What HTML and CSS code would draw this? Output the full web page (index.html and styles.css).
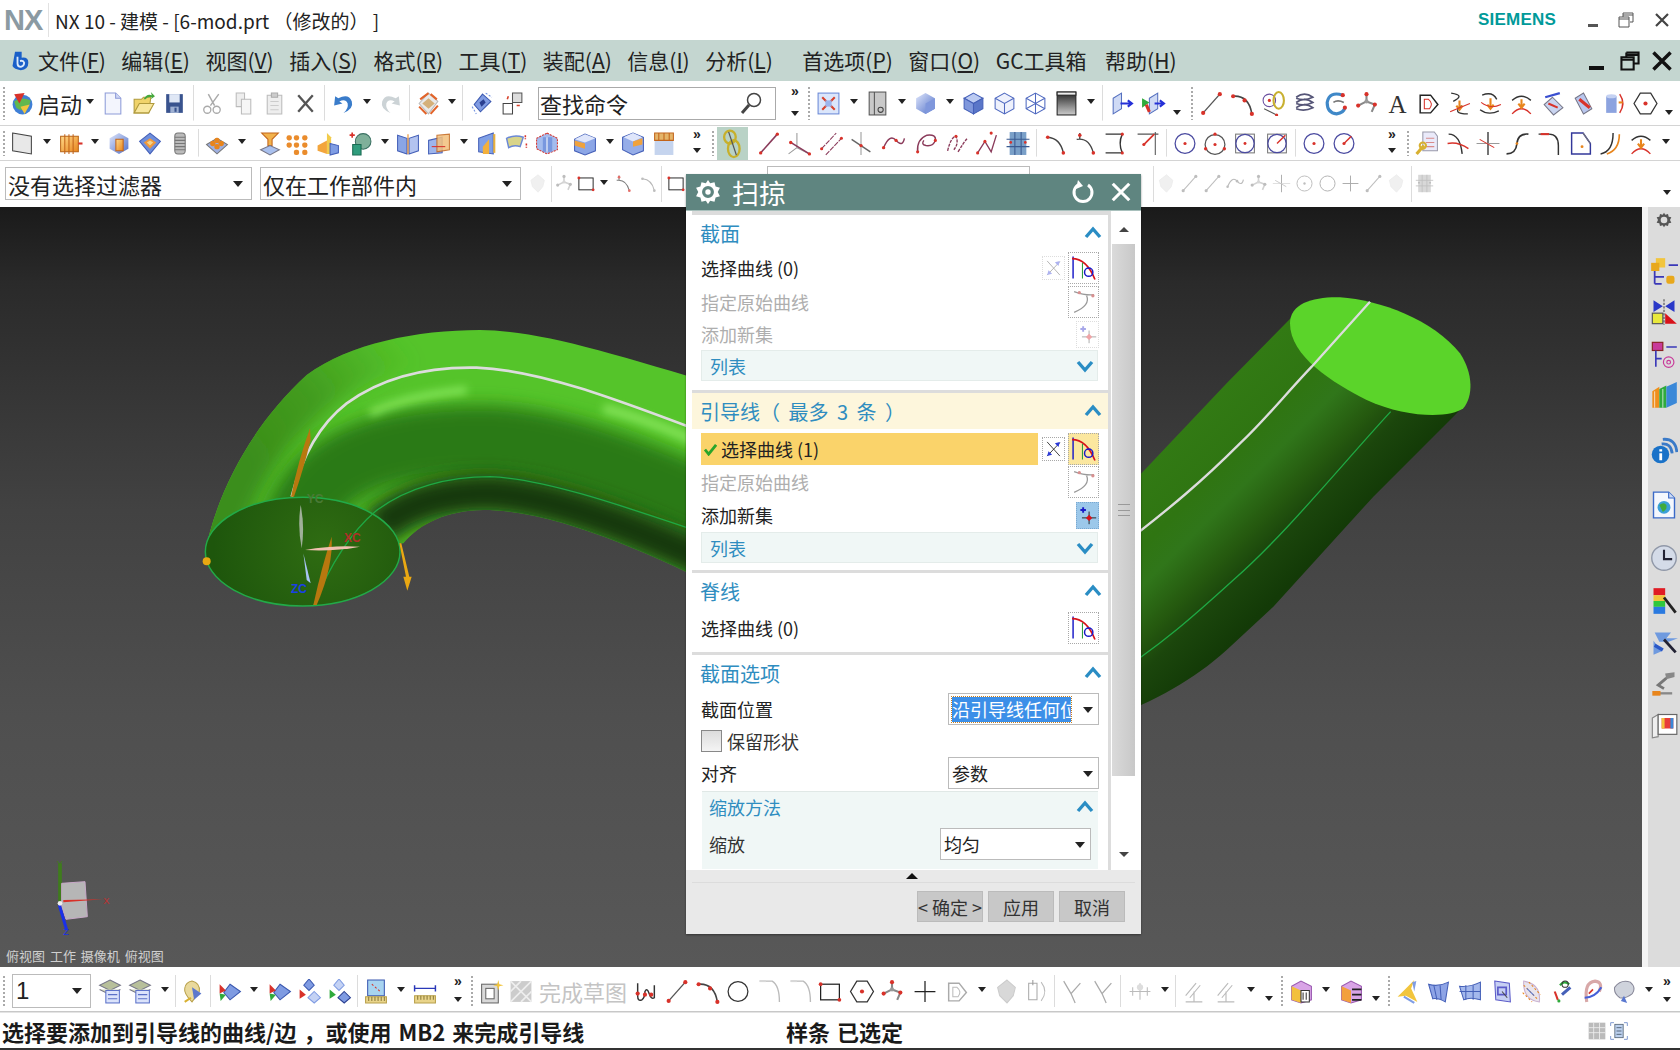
FILE: index.html
```html
<!DOCTYPE html>
<html lang="zh-CN">
<head>
<meta charset="utf-8">
<title>NX 10 - 建模</title>
<link rel="stylesheet" href="styles.css">
</head>
<body>
<svg class="sprite" aria-hidden="true">
<defs>
<linearGradient id="gb" x1="0" y1="0" x2="1" y2="1"><stop offset="0" stop-color="#dfe6fb"/><stop offset="1" stop-color="#4f6fc8"/></linearGradient>
<linearGradient id="go" x1="0" y1="0" x2="1" y2="1"><stop offset="0" stop-color="#ffd98a"/><stop offset="1" stop-color="#e8851c"/></linearGradient>
<linearGradient id="gg" x1="0" y1="0" x2="0" y2="1"><stop offset="0" stop-color="#222"/><stop offset="1" stop-color="#ccc"/></linearGradient>
</defs>
<symbol id="start" viewBox="0 0 24 24"><circle cx="12" cy="13" r="9.5" fill="#3f7fd6"/><path d="M4 10Q10 5 20 9L17 17Q10 20 6 16Z" fill="#62b84e"/><path d="M4 3L14 2L9 12Z" fill="#d8322a"/><path d="M10 15L19 13L14 22Z" fill="#f2c53d"/></symbol>
<symbol id="doc" viewBox="0 0 24 24"><path d="M5 2H15L20 7V22H5Z" fill="#f3f5fd" stroke="#8d9bd8"/><path d="M15 2V7H20" fill="#cfd7f4" stroke="#8d9bd8"/></symbol>
<symbol id="folder" viewBox="0 0 24 24"><path d="M3 8H10L12 6H19L17 21H3Z" fill="#f0d36a" stroke="#b09a3c"/><path d="M3 21L8 12H22L17 21Z" fill="#f8e79d" stroke="#b09a3c"/><path d="M12 8Q15 2 20 4L19 1L23 5L19 8L20 6Q16 5 14 8Z" fill="#45a83c"/></symbol>
<symbol id="save" viewBox="0 0 24 24"><path d="M4 3H20V21H4Z" fill="#39538e"/><path d="M7 3H17V11H7Z" fill="#dfe7f5"/><path d="M8 15H16V21H8Z" fill="#9eb0d2"/><path d="M12 16H14V20H12Z" fill="#39538e"/></symbol>
<symbol id="cut" viewBox="0 0 24 24"><path d="M8 3L14 14M18 3L10 14" stroke="#aaa" stroke-width="1.4" fill="none"/><circle cx="7" cy="18" r="3.4" fill="none" stroke="#aaa" stroke-width="1.3"/><circle cx="16" cy="18" r="3.4" fill="none" stroke="#aaa" stroke-width="1.3"/></symbol>
<symbol id="copy" viewBox="0 0 24 24"><path d="M5 2H13V15H5Z" fill="#eee" stroke="#bbb"/><path d="M10 8H19V22H10Z" fill="#f6f6f6" stroke="#bbb"/></symbol>
<symbol id="paste" viewBox="0 0 24 24"><path d="M5 4H19V22H5Z" fill="#eee" stroke="#bbb"/><path d="M9 2H15V6H9Z" fill="#ccc" stroke="#aaa"/><path d="M8 10H16M8 14H16M8 18H16" stroke="#ccc"/></symbol>
<symbol id="xx" viewBox="0 0 24 24"><path d="M5 4L19 20M19 4L5 20" stroke="#555" stroke-width="2.2" fill="none"/></symbol>
<symbol id="undo" viewBox="0 0 24 24"><path d="M4 5L3 14L11 12L8 10Q14 7 16 12Q17 17 12 21Q22 17 20 10Q17 2 7 7Z" fill="#3a7cca"/></symbol>
<symbol id="redo" viewBox="0 0 24 24"><path d="M20 5L21 14L13 12L16 10Q10 7 8 12Q7 17 12 21Q2 17 4 10Q7 2 17 7Z" fill="#ccd3d6"/></symbol>
<symbol id="stack" viewBox="0 0 24 24"><path d="M12 2L21 10L12 22L3 12Z" fill="#e9e9e9" stroke="#bbb"/><path d="M4 8L12 2M20 8L14 3M3 15L10 22M21 14L14 22" stroke="#e2642a" stroke-width="2"/><path d="M6 12L12 7L18 12L12 17Z" fill="#d4b07a"/></symbol>
<symbol id="dia" viewBox="0 0 24 24"><path d="M13 3L21 10L11 20L5 13Z" fill="#7f9be2" stroke="#3a58b0"/><path d="M10 11L14 8L16 11L12 15Z" fill="#2a3f90"/><path d="M3 15L7 22M16 2L22 6" stroke="#6f8fdf" stroke-dasharray="2 1.5"/></symbol>
<symbol id="boxes" viewBox="0 0 24 24"><path d="M12 2H21V11H12Z" fill="#ddd" stroke="#555"/><path d="M3 12H12V22H3Z" fill="#fff" stroke="#444"/><path d="M7 8L8 5M16 14L19 14" stroke="#d8412a" stroke-width="1.5"/></symbol>
<symbol id="fit" viewBox="0 0 24 24"><rect x="2" y="2" width="20" height="20" fill="#dbe6fb" stroke="#6a88d6"/><path d="M6 6L10 10M18 6L14 10M6 18L10 14M18 18L14 14" stroke="#d8412a" stroke-width="2"/><rect x="9" y="9" width="6" height="6" fill="#9cb4ec"/></symbol>
<symbol id="vsheet" viewBox="0 0 24 24"><rect x="4" y="1" width="16" height="22" fill="#c9c9c9" stroke="#555"/><path d="M9 1V23" stroke="#555"/><circle cx="15" cy="18" r="2.5" fill="none" stroke="#444"/></symbol>
<symbol id="cubeg" viewBox="0 0 24 24"><path d="M12 2L21 7V17L12 22L3 17V7Z" fill="url(#gb)"/><path d="M12 12L21 7V17L12 22Z" fill="#7f97dc"/></symbol>
<symbol id="cube" viewBox="0 0 24 24"><path d="M12 2L21 7L12 12L3 7Z" fill="#bccbf2" stroke="#4560b8"/><path d="M3 7L12 12V22L3 17Z" fill="#7f97dc" stroke="#4560b8"/><path d="M21 7L12 12V22L21 17Z" fill="#5a76c8" stroke="#4560b8"/></symbol>
<symbol id="cubew" viewBox="0 0 24 24"><path d="M12 2L21 7V17L12 22L3 17V7Z" fill="#eef1fc" stroke="#4f69c0"/><path d="M3 7L12 12L21 7M12 12V22" stroke="#4f69c0" fill="none"/></symbol>
<symbol id="cubewire" viewBox="0 0 24 24"><path d="M12 2L21 7V17L12 22L3 17V7Z" fill="none" stroke="#4f69c0"/><path d="M3 7L12 12L21 7M12 12V22M3 17L12 12L21 17M12 2V12" stroke="#4f69c0" fill="none"/></symbol>
<symbol id="gradbox" viewBox="0 0 24 24"><rect x="3" y="1" width="18" height="22" fill="url(#gg)" stroke="#222"/><rect x="3" y="1" width="18" height="3" fill="#eee" stroke="#222"/></symbol>
<symbol id="pane1" viewBox="0 0 24 24"><path d="M4 7L12 2V17L4 22Z" fill="#cfdaf5" stroke="#5570bf"/><path d="M11 12H21M18 9L22 12L18 15" stroke="#2530d8" stroke-width="2" fill="none"/></symbol>
<symbol id="pane2" viewBox="0 0 24 24"><path d="M9 7L17 2V17L9 22Z" fill="#cfdaf5" stroke="#5570bf"/><path d="M2 7L9 11L2 16Z" fill="#2faa3c"/><path d="M6 13L9 20" stroke="#d8322a" stroke-width="3"/><path d="M14 12H22M19 9L23 12L19 15" stroke="#2530d8" stroke-width="2" fill="none"/></symbol>
<symbol id="line" viewBox="0 0 24 24"><path d="M4 21L20 3" stroke="#555" stroke-width="1.3"/><circle cx="4" cy="21" r="2" fill="#d8322a"/><circle cx="20" cy="3" r="2" fill="#d8322a"/></symbol>
<symbol id="arc" viewBox="0 0 24 24"><path d="M3 5Q18 4 21 22" stroke="#444" stroke-width="1.5" fill="none"/><circle cx="3" cy="5" r="2" fill="#d8322a"/><circle cx="21" cy="22" r="2" fill="#d8322a"/><circle cx="14" cy="9" r="2" fill="#d8322a"/></symbol>
<symbol id="rings" viewBox="0 0 24 24"><circle cx="8" cy="9" r="6" fill="none" stroke="#6a4fa0"/><ellipse cx="17" cy="9" rx="5" ry="8" fill="none" stroke="#c8b030" stroke-width="2"/><path d="M3 17L15 23" stroke="#555"/><circle cx="8" cy="9" r="1.5" fill="#d8322a"/><circle cx="15" cy="23" r="1.5" fill="#d8322a"/></symbol>
<symbol id="helix" viewBox="0 0 24 24"><path d="M4 6Q12 0 20 6Q12 10 4 7M4 11Q12 5 20 11Q12 15 4 12M4 16Q12 10 20 16Q12 20 4 17" fill="none" stroke="#557" stroke-width="1.6"/></symbol>
<symbol id="swirl" viewBox="0 0 24 24"><path d="M19 4Q6 0 4 11Q4 21 13 22Q20 21 21 16" fill="none" stroke="#3f88c8" stroke-width="3"/><path d="M10 11Q14 8 20 11" stroke="#777" stroke-width="1.5" fill="none"/><circle cx="19" cy="4" r="2" fill="#d8322a"/><circle cx="21" cy="16" r="2" fill="#d8322a"/></symbol>
<symbol id="poly" viewBox="0 0 24 24"><path d="M12 3V10L4 14M12 10L20 13L17 20" stroke="#888" stroke-width="2" fill="none"/><circle cx="12" cy="3" r="2" fill="#d8322a"/><circle cx="4" cy="14" r="2" fill="#d8322a"/><circle cx="20" cy="13" r="2" fill="#d8322a"/><circle cx="12" cy="10" r="2" fill="#999"/></symbol>
<symbol id="outline" viewBox="0 0 24 24"><path d="M4 4H14L21 13L14 21H4Z" fill="none" stroke="#222" stroke-width="1.4"/><path d="M8 8H12Q17 12 13 17H8Z" fill="none" stroke="#d8322a"/></symbol>
<symbol id="curvea" viewBox="0 0 24 24"><path d="M4 2Q18 4 6 10M14 14Q4 22 20 22" fill="none" stroke="#333" stroke-width="1.3"/><path d="M12 9V16M9 14L12 18L15 14" stroke="#e8851c" stroke-width="2" fill="none"/><path d="M3 20Q12 16 22 12" stroke="#d8322a" fill="none"/></symbol>
<symbol id="curveb" viewBox="0 0 24 24"><path d="M4 4Q14 0 18 8M2 18Q10 24 20 19" fill="none" stroke="#333" stroke-width="1.3"/><path d="M12 7V15M9 13L12 17L15 13" stroke="#e8851c" stroke-width="2" fill="none"/><path d="M3 11Q12 18 22 13" stroke="#d8322a" fill="none"/></symbol>
<symbol id="curvec" viewBox="0 0 24 24"><path d="M3 9Q12 1 21 9" fill="none" stroke="#333" stroke-width="1.3"/><path d="M3 22Q12 12 21 22" fill="none" stroke="#d8322a" stroke-width="1.3"/><path d="M12 8V15M9 12L12 16L15 12" stroke="#e8851c" stroke-width="2" fill="none"/></symbol>
<symbol id="bar" viewBox="0 0 24 24"><path d="M5 6L19 2" stroke="#3a4fd0" stroke-width="2.2"/><path d="M12 6L22 16L13 23L4 13Z" fill="#c9d4f0" stroke="#778"/><path d="M8 12L17 16" stroke="#d8322a" stroke-width="2"/></symbol>
<symbol id="twist" viewBox="0 0 24 24"><path d="M4 7L12 2L20 17L12 22Z" fill="#b9c7ee" stroke="#778"/><path d="M8 8L18 16" stroke="#d8322a" stroke-width="3"/></symbol>
<symbol id="cyl" viewBox="0 0 24 24"><path d="M4 5H14V21H4Z" fill="#8ca3df"/><ellipse cx="9" cy="5" rx="5" ry="2" fill="#c4d1f2"/><path d="M17 3Q23 12 17 21" stroke="#d8322a" fill="none" stroke-width="1.4"/><path d="M16 11H20" stroke="#e8851c" stroke-width="2"/></symbol>
<symbol id="hex" viewBox="0 0 24 24"><path d="M7 2H17L23 12L17 22H7L1 12Z" fill="#fff" stroke="#333" stroke-width="1.2"/><circle cx="12" cy="12" r="2" fill="#d8322a"/></symbol>
<symbol id="sheet" viewBox="0 0 24 24"><path d="M3 2L21 5V22L3 19Z" fill="#e8e8e8" stroke="#444"/></symbol>
<symbol id="ocyl" viewBox="0 0 24 24"><path d="M3 5H20V20H3Z" fill="url(#go)" stroke="#b8661a"/><path d="M7 3V22M11 3V22M15 3V22" stroke="#c2641a"/><path d="M20 12H24" stroke="#d8322a" stroke-width="2"/></symbol>
<symbol id="ocube" viewBox="0 0 24 24"><path d="M12 2L21 7V17L12 22L3 17V7Z" fill="url(#gb)"/><path d="M9 8H16V19H9Z" fill="url(#go)" stroke="#c2641a"/></symbol>
<symbol id="hollow" viewBox="0 0 24 24"><path d="M12 2L22 10L12 22L2 10Z" fill="#6e8edb" stroke="#4560b8"/><path d="M12 7L18 11L12 17L6 11Z" fill="#f0993a"/><path d="M9 11L12 9L15 11L12 14Z" fill="#f7d38a"/></symbol>
<symbol id="thread" viewBox="0 0 24 24"><rect x="7" y="2" width="10" height="20" rx="3" fill="#bbb" stroke="#777"/><path d="M7 6H17M7 9H17M7 12H17M7 15H17M7 18H17" stroke="#777"/></symbol>
<symbol id="tray" viewBox="0 0 24 24"><path d="M2 13L12 7L22 13L12 22Z" fill="#9eb0e2" stroke="#777"/><circle cx="8" cy="12" r="2.6" fill="#e8851c"/><circle cx="12" cy="9" r="2.6" fill="#e8851c"/><circle cx="16" cy="12" r="2.6" fill="#e8851c"/><circle cx="12" cy="15" r="2.6" fill="#e8851c"/></symbol>
<symbol id="pad" viewBox="0 0 24 24"><path d="M4 2H20L14 8V14H10V8Z" fill="#f2b24c" stroke="#c2641a"/><path d="M3 18L12 14L21 18L12 23Z" fill="#a9c0ee" stroke="#778"/></symbol>
<symbol id="ogrid" viewBox="0 0 24 24"><g fill="#ea8c2c"><rect x="2" y="4" width="5" height="5" rx="2"/><rect x="9" y="4" width="5" height="5" rx="2"/><rect x="17" y="4" width="5" height="5" rx="2"/><rect x="2" y="11" width="5" height="5" rx="2"/><rect x="9" y="11" width="5" height="5" rx="2"/><rect x="17" y="11" width="5" height="5" rx="2"/><rect x="9" y="18" width="5" height="5" rx="2"/><rect x="17" y="18" width="5" height="5" rx="2"/></g></symbol>
<symbol id="omix" viewBox="0 0 24 24"><path d="M2 14L11 9V22L2 19Z" fill="#f3a53c"/><path d="M11 2L15 6V22L11 22Z" fill="#f2cc4c"/><path d="M14 12L22 14V21L14 23Z" fill="#7f9de4" stroke="#4560b8"/></symbol>
<symbol id="sphere" viewBox="0 0 24 24"><path d="M2 4H7M4.5 1.5V6.5" stroke="#d8322a" stroke-width="1.6"/><circle cx="15" cy="10" r="7.5" fill="#7fb09a" stroke="#3a7062"/><path d="M5 13H13V23H5Z" fill="#2f9c7c"/><path d="M5 13H13V23H5Z" fill="none" stroke="#1a6a52"/></symbol>
<symbol id="book" viewBox="0 0 24 24"><path d="M2 4L11 7V22L2 19Z" fill="#8aa5e6" stroke="#4560b8"/><path d="M22 4L13 7V22L22 19Z" fill="#b3c4f0" stroke="#4560b8"/><path d="M12 3V22" stroke="#e8851c"/></symbol>
<symbol id="split" viewBox="0 0 24 24"><path d="M2 9L15 6V21L2 22Z" fill="#9eb5ec" stroke="#4560b8"/><path d="M10 4L22 3V18L10 20Z" fill="#f3c07c" opacity=".85" stroke="#c2641a"/><path d="M5 15H18" stroke="#d8322a"/></symbol>
<symbol id="byel" viewBox="0 0 24 24"><path d="M4 7L18 2V22L4 20Z" fill="#80a0e6" stroke="#4560b8"/><path d="M8 15L14 8V22H8Z" fill="#f3b03c"/><path d="M19 3V21" stroke="#e8b03c" stroke-width="2"/></symbol>
<symbol id="patch" viewBox="0 0 24 24"><path d="M2 7Q10 3 18 6L15 15Q9 13 4 16Z" fill="#d8d48a" stroke="#6a88d6" stroke-width="1.4"/><path d="M20 4V8M21 12V16" stroke="#d8322a" stroke-width="1.5" stroke-dasharray="2 1"/></symbol>
<symbol id="bdash" viewBox="0 0 24 24"><path d="M12 2L22 7V18L12 22L2 17V7Z" fill="#a4bcee" stroke="#d8322a" stroke-dasharray="2 1"/><path d="M8 6H17V20H8Z" fill="#6e8edb" opacity=".8"/><path d="M12 6V20" stroke="#fff"/></symbol>
<symbol id="otop" viewBox="0 0 24 24"><path d="M2 8L12 3L22 7V19L12 23L2 19Z" fill="#8ca6e6" stroke="#4560b8"/><path d="M2 8L12 3L22 7L12 11Z" fill="#dfe6fb"/><path d="M2 9L12 12V17L2 14Z" fill="#f0a23c"/></symbol>
<symbol id="otop2" viewBox="0 0 24 24"><path d="M2 6L12 2L22 6V19L12 23L2 18Z" fill="#95ade8" stroke="#4560b8"/><path d="M3 6L12 2L21 6L12 10Z" fill="#dfe6fb"/><path d="M12 10L21 7V13L12 15Z" fill="#f0a23c"/></symbol>
<symbol id="otop3" viewBox="0 0 24 24"><path d="M3 6H21V23H3Z" fill="#c5d4ee"/><path d="M3 2L21 2V9L3 9Z" fill="#e4b56a" stroke="#c2641a"/><path d="M7 2V9M12 2V9M17 2V9" stroke="#c2641a"/></symbol>
<symbol id="lasso" viewBox="0 0 24 24"><ellipse cx="10" cy="7" rx="4.5" ry="5" fill="none" stroke="#c7b02c" stroke-width="1.8"/><ellipse cx="13" cy="16" rx="4.5" ry="6.5" fill="none" stroke="#c7b02c" stroke-width="1.8"/><path d="M9 3L15 21" stroke="#555"/></symbol>
<symbol id="dline" viewBox="0 0 24 24"><path d="M4 21L20 3" stroke="#8a3a5a" stroke-width="1.5"/><circle cx="4" cy="21" r="1.6" fill="#d8322a"/><circle cx="20" cy="3" r="1.6" fill="#d8322a"/></symbol>
<symbol id="axes" viewBox="0 0 24 24"><path d="M10 2V16L22 22M10 16L2 22" stroke="#999" fill="none"/><path d="M4 11L22 22" stroke="#8a3a5a" stroke-width="1.5"/><circle cx="4" cy="11" r="1.6" fill="#d8322a"/><circle cx="22" cy="22" r="1.6" fill="#d8322a"/></symbol>
<symbol id="plines" viewBox="0 0 24 24"><path d="M3 17L17 2M7 23L22 7" stroke="#8a3a5a" stroke-dasharray="5 1"/><circle cx="3" cy="17" r="1.5" fill="#d8322a"/><circle cx="22" cy="7" r="1.5" fill="#d8322a"/></symbol>
<symbol id="xlines" viewBox="0 0 24 24"><path d="M12 1V23" stroke="#999"/><path d="M3 8L21 20" stroke="#666" stroke-width="1.4"/><circle cx="12" cy="14" r="1.6" fill="#d8322a"/></symbol>
<symbol id="scurve" viewBox="0 0 24 24"><path d="M2 16Q8 2 14 9T22 7" fill="none" stroke="#8a3a5a" stroke-width="1.4"/><circle cx="2" cy="16" r="1.6" fill="#d8322a"/><circle cx="14" cy="9" r="1.6" fill="#d8322a"/></symbol>
<symbol id="loop" viewBox="0 0 24 24"><path d="M3 20Q2 8 12 4Q21 3 20 9Q18 15 11 14Q6 13 9 9" fill="none" stroke="#8a3a5a" stroke-width="1.4"/><circle cx="3" cy="20" r="1.5" fill="#d8322a"/><circle cx="20" cy="9" r="1.5" fill="#d8322a"/></symbol>
<symbol id="wave" viewBox="0 0 24 24"><path d="M3 19Q6 6 11 5Q14 12 9 18M13 20Q19 10 22 7" fill="none" stroke="#8a3a5a" stroke-width="1.3" stroke-dasharray="3 1"/><circle cx="11" cy="5" r="1.5" fill="#d8322a"/></symbol>
<symbol id="zig" viewBox="0 0 24 24"><path d="M3 21L10 10L16 20L21 4" fill="none" stroke="#8a3a5a" stroke-width="1.3"/><circle cx="3" cy="21" r="1.5" fill="#d8322a"/><circle cx="16" cy="2" r="1.5" fill="#d8322a"/><circle cx="10" cy="10" r="1.5" fill="#d8322a"/></symbol>
<symbol id="hash" viewBox="0 0 24 24"><rect x="4" y="1" width="16" height="22" fill="#7aa0c8"/><path d="M1 8H23M1 15H23M9 1V23M15 1V23" stroke="#3a5a90"/><circle cx="5" cy="11" r="1.3" fill="#d8322a"/><circle cx="19" cy="11" r="1.3" fill="#d8322a"/></symbol>
<symbol id="carc" viewBox="0 0 24 24"><path d="M5 6Q17 7 20 21" fill="none" stroke="#444" stroke-width="1.4"/><circle cx="5" cy="6" r="1.7" fill="#d8322a"/><circle cx="20" cy="21" r="1.7" fill="#d8322a"/></symbol>
<symbol id="carc2" viewBox="0 0 24 24"><path d="M7 2V8M4 8Q16 6 20 21" fill="none" stroke="#444" stroke-width="1.3"/><circle cx="7" cy="4" r="1.7" fill="#d8322a"/><circle cx="20" cy="21" r="1.7" fill="#d8322a"/></symbol>
<symbol id="brack" viewBox="0 0 24 24"><path d="M2 3H18Q14 12 18 21H2" fill="none" stroke="#333" stroke-width="1.4"/><circle cx="18" cy="3" r="1.5" fill="#d8322a"/><circle cx="18" cy="21" r="1.5" fill="#d8322a"/></symbol>
<symbol id="brack2" viewBox="0 0 24 24"><path d="M2 3H22M19 1V23" fill="none" stroke="#555"/><path d="M8 13L18 3" stroke="#d8322a" stroke-width="1.6"/><circle cx="8" cy="13" r="1.5" fill="#d8322a"/></symbol>
<symbol id="circ" viewBox="0 0 24 24"><circle cx="12" cy="12" r="9.5" fill="none" stroke="#4a4aa0" stroke-width="1.2"/><circle cx="12" cy="12" r="1.5" fill="#d8322a"/></symbol>
<symbol id="circr" viewBox="0 0 24 24"><circle cx="12" cy="12" r="9.5" fill="none" stroke="#4a4aa0" stroke-width="1.2"/><path d="M12 12L19 5" stroke="#d8322a" stroke-width="1.4"/><circle cx="12" cy="12" r="1.5" fill="#d8322a"/></symbol>
<symbol id="circt" viewBox="0 0 24 24"><circle cx="12" cy="13" r="9.5" fill="none" stroke="#555" stroke-width="1.2"/><circle cx="12" cy="13" r="1.5" fill="#d8322a"/><circle cx="12" cy="3" r="1.6" fill="#d8322a"/><circle cx="3" cy="17" r="1.6" fill="#d8322a"/><circle cx="21" cy="17" r="1.6" fill="#d8322a"/></symbol>
<symbol id="circs" viewBox="0 0 24 24"><rect x="3" y="3" width="18" height="18" fill="none" stroke="#777"/><circle cx="12" cy="12" r="8.8" fill="none" stroke="#4a4aa0" stroke-width="1.2"/><circle cx="12" cy="12" r="1.4" fill="#d8322a"/></symbol>
<symbol id="circq" viewBox="0 0 24 24"><rect x="3" y="3" width="18" height="18" fill="none" stroke="#777"/><circle cx="12" cy="12" r="8.8" fill="none" stroke="#4a4aa0" stroke-width="1.2"/><path d="M12 12L20 4" stroke="#d8322a" stroke-width="1.4"/></symbol>
<symbol id="ydoc" viewBox="0 0 24 24"><path d="M8 1H19L22 5V19H8Z" fill="#eaeafa" stroke="#99a"/><path d="M11 7H19M11 11H19M11 15H19" stroke="#d88a8a"/><path d="M2 22L9 14" stroke="#d8b030" stroke-width="3"/><circle cx="8" cy="14" r="3" fill="none" stroke="#d8b030" stroke-width="2"/></symbol>
<symbol id="cross1" viewBox="0 0 24 24"><path d="M3 3Q14 3 16 22" stroke="#333" fill="none" stroke-width="1.4"/><path d="M2 12Q12 10 22 17" stroke="#d8322a" fill="none" stroke-width="1.4"/></symbol>
<symbol id="cross2" viewBox="0 0 24 24"><path d="M12 1V23" stroke="#333" stroke-width="1.3"/><path d="M1 12H23" stroke="#999"/><path d="M4 8L18 16" stroke="#d8322a"/></symbol>
<symbol id="scurve2" viewBox="0 0 24 24"><path d="M1 22Q10 22 11 12T22 3" fill="none" stroke="#333" stroke-width="1.6"/><circle cx="11" cy="12" r="1.3" fill="#e8851c"/></symbol>
<symbol id="corner" viewBox="0 0 24 24"><path d="M2 3H12Q21 3 21 14V23" fill="none" stroke="#333" stroke-width="1.4"/><path d="M4 3H12" stroke="#d8322a" stroke-width="2"/></symbol>
<symbol id="tab" viewBox="0 0 24 24"><path d="M3 2H14L21 12V22H3Z" fill="none" stroke="#33389a" stroke-width="1.4"/><path d="M14 2L21 12" stroke="#777"/><circle cx="13" cy="15" r="1.4" fill="#e8851c"/></symbol>
<symbol id="rcurve" viewBox="0 0 24 24"><path d="M2 22Q14 20 14 2" fill="none" stroke="#333" stroke-width="1.4"/><path d="M8 22Q20 18 20 3" fill="none" stroke="#e8851c" stroke-width="1.6"/></symbol>
<symbol id="stackdoc" viewBox="0 0 24 24"><path d="M12 1L22 6L12 11L2 6Z" fill="#b7bf9a" stroke="#778"/><path d="M2 10L12 15L22 10" stroke="#778" fill="#d9ddc0"/><rect x="8" y="11" width="13" height="12" fill="#dbe3fb" stroke="#5a70c8"/><path d="M10 15H19M10 19H19" stroke="#5a70c8"/></symbol>
<symbol id="ydia" viewBox="0 0 24 24"><path d="M12 2Q20 4 19 12L12 22Q4 14 5 9Q6 3 12 2Z" fill="#e9d99c" stroke="#b8a04a"/><path d="M12 8L21 14L14 20Z" fill="#5c78cc"/><path d="M5 22L11 18" stroke="#d8b030" stroke-width="2"/></symbol>
<symbol id="rdia" viewBox="0 0 24 24"><path d="M13 5L23 12L13 20L7 13Z" fill="#7f9be2" stroke="#3a58b0"/><path d="M3 5L9 11L3 14Z" fill="#d8322a"/><path d="M3 14L9 15L4 21Z" fill="#2faa3c"/></symbol>
<symbol id="dia2" viewBox="0 0 24 24"><path d="M12 0L17 6L12 11L7 6Z" fill="#7f9be2" stroke="#3a58b0"/><path d="M17 12L23 18L17 23L11 18Z" fill="#c4d2f4" stroke="#7f9be2"/><path d="M3 10L9 15L3 19Z" fill="#d8322a"/></symbol>
<symbol id="dia3" viewBox="0 0 24 24"><path d="M12 0L17 6L12 11L7 6Z" fill="#c4d2f4" stroke="#7f9be2"/><path d="M17 12L23 18L17 23L11 18Z" fill="#7f9be2" stroke="#2a3f90"/><path d="M3 10L9 15L3 19Z" fill="#2faa3c"/></symbol>
<symbol id="ruler" viewBox="0 0 24 24"><path d="M4 1H20V16H4Z" fill="#a8d4f0" stroke="#3a58b0"/><path d="M8 5L16 12" stroke="#d8322a" stroke-dasharray="2 2"/><path d="M2 17H22V23H2Z" fill="#e9d48a" stroke="#b8a04a"/><path d="M5 17V21M8 17V21M11 17V21M14 17V21M17 17V21M20 17V21" stroke="#8a7a3a"/></symbol>
<symbol id="ruler2" viewBox="0 0 24 24"><path d="M2 9H22M2 6V12M22 6V12" stroke="#2a38b8" stroke-width="1.4"/><path d="M2 16H22V23H2Z" fill="#e9d48a" stroke="#b8a04a"/><path d="M5 16V20M8 16V20M11 16V20M14 16V20M17 16V20M20 16V20" stroke="#8a7a3a"/></symbol>
<symbol id="sknew" viewBox="0 0 24 24"><rect x="3" y="5" width="16" height="18" fill="#d9d9d9" stroke="#666"/><rect x="7" y="9" width="8" height="10" fill="#fff" stroke="#666"/><path d="M19 1L20 5L24 6L20 7L19 11L18 7L14 6L18 5Z" fill="#f2c53d"/></symbol>
<symbol id="skdone" viewBox="0 0 24 24"><rect x="2" y="2" width="20" height="20" fill="#ccc"/><path d="M2 22L22 2M2 12L12 2M12 22L22 12M2 2L22 22" stroke="#eee" stroke-width="1.6"/></symbol>
<symbol id="studio" viewBox="0 0 24 24"><path d="M4 4V16Q4 22 8 20Q11 18 11 12Q13 8 15 14Q17 20 20 18V6" fill="none" stroke="#333" stroke-width="1.4"/><circle cx="4" cy="14" r="2" fill="#d8322a"/><circle cx="11" cy="15" r="2" fill="#d8322a"/><circle cx="17" cy="15" r="2" fill="#d8322a"/></symbol>
<symbol id="circle" viewBox="0 0 24 24"><circle cx="12" cy="12" r="9.5" fill="none" stroke="#333" stroke-width="1.2"/></symbol>
<symbol id="gfill" viewBox="0 0 24 24"><path d="M3 2H15Q22 6 22 22" fill="none" stroke="#bbb" stroke-width="1.3"/><path d="M3 2H9" stroke="#d8d8d8" stroke-width="2"/></symbol>
<symbol id="rect" viewBox="0 0 24 24"><rect x="3" y="5" width="18" height="15" fill="none" stroke="#222" stroke-width="1.2"/><circle cx="3" cy="5" r="1.8" fill="#d8322a"/><circle cx="21" cy="20" r="1.8" fill="#d8322a"/></symbol>
<symbol id="plus" viewBox="0 0 24 24"><path d="M12 2V22M2 12H22" stroke="#222" stroke-width="1.2"/></symbol>
<symbol id="goutline" viewBox="0 0 24 24"><path d="M4 4H14L21 13L14 21H4Z" fill="none" stroke="#aaa" stroke-width="1.4"/><path d="M8 8H12Q17 12 13 17H8Z" fill="none" stroke="#bbb"/></symbol>
<symbol id="gblob" viewBox="0 0 24 24"><path d="M12 1L20 8L18 16L12 23L5 16L3 8Z" fill="#d8d8d8" stroke="#ccc"/></symbol>
<symbol id="gcyl" viewBox="0 0 24 24"><path d="M4 4H12V20H4Z" fill="none" stroke="#aaa"/><path d="M16 3Q23 12 16 21" stroke="#bbb" fill="none"/><path d="M8 1V6" stroke="#999"/></symbol>
<symbol id="gx1" viewBox="0 0 24 24"><path d="M5 2L12 14L21 4M12 14L16 23" stroke="#aaa" fill="none" stroke-width="1.2"/></symbol>
<symbol id="gx2" viewBox="0 0 24 24"><path d="M2 12H22M12 4V20" stroke="#bbb"/><path d="M5 8V16M19 8V16" stroke="#bbb"/><circle cx="12" cy="8" r="3" fill="#ddd"/></symbol>
<symbol id="gpar" viewBox="0 0 24 24"><path d="M4 16L14 4M8 18L18 6M12 22V12M4 22H20" stroke="#bbb" stroke-width="1.1"/></symbol>
<symbol id="pbox" viewBox="0 0 24 24"><path d="M3 7L12 2L22 7V20L12 23L3 20Z" fill="#d9a4e6" stroke="#9a5ab0"/><path d="M3 7L12 11V23L3 20Z" fill="#f3c03c"/><path d="M12 11H20V22H12Z" fill="#fff" stroke="#333"/><path d="M14 13V20M17 13V20" stroke="#333"/></symbol>
<symbol id="pbox2" viewBox="0 0 24 24"><path d="M3 7L12 2L22 7V20L12 23L3 20Z" fill="#d9a4e6" stroke="#9a5ab0"/><path d="M3 7L12 11V23L3 20Z" fill="#f3a03c"/><path d="M13 10H22M13 15H22M13 20H22" stroke="#222" stroke-width="1.6"/></symbol>
<symbol id="ywing" viewBox="0 0 24 24"><path d="M18 1L15 9L21 22L10 16L2 17L10 9Z" fill="#f2c53d"/><path d="M16 3L20 2L18 12Z" fill="#7f9de4"/><path d="M8 17L18 23" stroke="#7f9de4" stroke-width="2"/></symbol>
<symbol id="net1" viewBox="0 0 24 24"><path d="M3 5Q12 8 22 3L19 22Q12 18 7 19Z" fill="#8ea4e6" stroke="#4560b8"/><path d="M8 6L11 20M14 6L15 20" stroke="#4560b8"/></symbol>
<symbol id="net2" viewBox="0 0 24 24"><path d="M2 7Q12 8 22 3V20Q12 17 6 20Z" fill="#a4b8ec" stroke="#4560b8"/><path d="M2 12H22M8 6V20M15 6V20" stroke="#4560b8"/></symbol>
<symbol id="net3" viewBox="0 0 24 24"><path d="M6 2L20 4L21 22L7 20Z" fill="#c6cff3" stroke="#5a5ac8"/><path d="M9 8H17V15H9Z" fill="none" stroke="#5a5ac8" stroke-width="1.6"/><path d="M13 12L18 18" stroke="#444"/></symbol>
<symbol id="net4" viewBox="0 0 24 24"><path d="M5 2Q22 5 20 22Q4 20 5 2Z" fill="#e9e4ec" stroke="#c9b0d0"/><path d="M5 6L19 20M10 3L21 15M4 13L13 22" stroke="#e8851c" stroke-dasharray="2 2"/><path d="M8 9L15 16" stroke="#5a78d0"/></symbol>
<symbol id="net5" viewBox="0 0 24 24"><path d="M10 6Q14 1 19 5" stroke="#2faa3c" stroke-width="2" fill="none"/><path d="M5 12L8 20" stroke="#d8322a" stroke-width="2"/><path d="M12 15L20 8" stroke="#4560b8" stroke-width="3"/><circle cx="15" cy="5" r="3" fill="none" stroke="#333"/><circle cx="9" cy="21" r="1.5" fill="#2faa3c"/></symbol>
<symbol id="net6" viewBox="0 0 24 24"><path d="M6 22Q3 3 14 2Q22 3 18 12" fill="none" stroke="#d8a8a8" stroke-width="3"/><path d="M4 18Q14 18 20 8" stroke="#4560d8" stroke-width="2" fill="none"/><path d="M8 14L12 10" stroke="#d8322a" stroke-width="1.6"/></symbol>
<symbol id="net7" viewBox="0 0 24 24"><path d="M3 8Q9 0 18 3Q24 8 20 14Q14 19 8 18Q2 14 3 8Z" fill="#cfd3dc" stroke="#889"/><path d="M12 16L15 23L9 21Z" fill="#5a78d0"/></symbol>
<symbol id="nav1" viewBox="0 0 24 24"><rect x="5" y="1" width="8" height="8" fill="#f2c53d"/><rect x="1" y="5" width="7" height="7" fill="#e8a81c"/><path d="M4 12V23M4 17H12M4 23H10M16 7H24" stroke="#3a38b8" stroke-width="1.5"/><rect x="14" y="16" width="7" height="7" rx="2" fill="#e8a81c"/></symbol>
<symbol id="nav2" viewBox="0 0 24 24"><path d="M3 2L11 7L3 12ZM21 2L13 7L21 12Z" fill="#2a38c8"/><path d="M12 1V23" stroke="#555" stroke-dasharray="2 1"/><rect x="2" y="13" width="9" height="9" fill="#e9e93c" stroke="#555"/><path d="M13 22V13L23 22Z" fill="#d8121a"/></symbol>
<symbol id="nav3" viewBox="0 0 24 24"><rect x="2" y="2" width="9" height="7" fill="#c83a9a" stroke="#822"/><path d="M5 9V23M5 16H10M14 6H23" stroke="#3a38b8" stroke-width="1.4"/><circle cx="16" cy="19" r="4.5" fill="none" stroke="#c83a9a"/><circle cx="16" cy="19" r="1.6" fill="none" stroke="#c83a9a"/></symbol>
<symbol id="nav4" viewBox="0 0 24 24"><path d="M2 8L8 4V22H2Z" fill="#ef8f1c"/><path d="M8 6L14 3V22H8Z" fill="#2faa3c"/><path d="M14 4L23 0V18L14 22Z" fill="#3a88d8"/><path d="M4 8V22M11 6V22" stroke="#fff" stroke-width=".6"/></symbol>
<symbol id="nav5" viewBox="0 0 24 24"><circle cx="9" cy="15" r="7.5" fill="#1a72c8"/><path d="M8 14H10.4V20H8ZM8 10.5H10.4V12.5H8Z" fill="#fff"/><path d="M10 6Q18 5 19 14M11 2Q22 1 23 13" fill="none" stroke="#3a7ac8" stroke-width="2.4"/></symbol>
<symbol id="nav6" viewBox="0 0 24 24"><path d="M3 1H16L21 6V23H3Z" fill="#f4f7fd" stroke="#3a6ac8" stroke-width="1.2"/><path d="M16 1V6H21" fill="#cfdcf5" stroke="#3a6ac8"/><circle cx="12" cy="14" r="5.5" fill="#3aa0d8"/><path d="M8 12Q12 9 14 12Q15 16 11 18Z" fill="#3faa3c"/></symbol>
<symbol id="nav7" viewBox="0 0 24 24"><circle cx="12" cy="12" r="10.5" fill="#d4dbe8" stroke="#9098a8" stroke-width="1.2"/><path d="M12 5V13H19" stroke="#223" stroke-width="1.8" fill="none"/></symbol>
<symbol id="nav8" viewBox="0 0 24 24"><rect x="3" y="1" width="10" height="6" fill="#e01c24"/><rect x="3" y="7" width="10" height="5" fill="#f2c53d"/><rect x="3" y="12" width="10" height="5" fill="#2fc83c"/><rect x="3" y="17" width="10" height="6" fill="#2a7ae0"/><path d="M12 9L22 22" stroke="#222" stroke-width="2.4"/></symbol>
<symbol id="nav9" viewBox="0 0 24 24"><path d="M4 3H18L14 8H24L16 11H8ZM3 10V22L10 19Z" fill="#6f9adf"/><path d="M12 9L22 20" stroke="#223" stroke-width="2.4"/><path d="M4 14L11 18" stroke="#2a58c8" stroke-width="3"/></symbol>
<symbol id="nav10" viewBox="0 0 24 24"><path d="M13 3L21 2L21 6L14 8Z" fill="#888"/><path d="M14 7L7 13L12 16" stroke="#777" stroke-width="2.4" fill="none"/><path d="M3 19H19V21H3Z" fill="#888"/><path d="M2 18H9V22H2Z" fill="#e8851c"/></symbol>
<symbol id="nav11" viewBox="0 0 24 24"><path d="M2 6L7 3V22L2 23Z" fill="#eee" stroke="#888"/><rect x="7" y="3" width="16" height="17" fill="#fff" stroke="#666"/><rect x="10" y="6" width="10" height="9" fill="#e83a3a"/><rect x="10" y="6" width="2.5" height="9" fill="#f3c03c"/><rect x="17.5" y="6" width="2.5" height="9" fill="#3a88d8"/></symbol>
<symbol id="cselect" viewBox="0 0 24 24"><path d="M2 1V22" stroke="#1a1ac8" stroke-width="1.4"/><path d="M1 3Q15 3 23 23" stroke="#d8121a" stroke-width="1.6" fill="none"/><circle cx="17" cy="16" r="4" fill="none" stroke="#1a1ac8" stroke-width="1.4"/><path d="M11 7V22" stroke="#2a9a3c"/></symbol>
<symbol id="creset" viewBox="0 0 24 24"><path d="M3 2L21 22M21 3L3 22" stroke="#222" stroke-width="1.2"/><path d="M21 2L14 4L19 9Z M3 22L10 20L5 15Z" fill="#2a38d8"/></symbol>
<symbol id="cspec" viewBox="0 0 24 24"><path d="M3 2Q14 6 22 5M15 6Q19 15 3 22" fill="none" stroke="#999" stroke-width="1.2"/><circle cx="8" cy="3" r="1.6" fill="#d89090"/><circle cx="21" cy="6" r="1.6" fill="#d89090"/></symbol>
<symbol id="cadd" viewBox="0 0 24 24"><path d="M3 5H10M6.500 1.500V8.500" stroke="#1a1ac8" stroke-width="2.4"/><path d="M14 7V23M5 15H23" stroke="#222" stroke-width="1.2"/><path d="M14 11L18 15L14 19L10 15Z" fill="#d8121a"/></symbol>
<symbol id="sb1" viewBox="0 0 24 24"><rect x="2" y="2" width="20" height="20" fill="#bbb"/><path d="M2 8H22M2 14H22M8 2V22M15 2V22" stroke="#eee"/></symbol>
<symbol id="sb2" viewBox="0 0 24 24"><path d="M2 6V2H6M18 2H22V6M22 18V22H18M6 22H2V18" fill="none" stroke="#6a88c8"/><rect x="7" y="4" width="10" height="16" fill="#bcd0ee" stroke="#567"/><path d="M9 8H15M9 12H15M9 16H15" stroke="#456"/></symbol>
<symbol id="gearw" viewBox="0 0 24 24"><path d="M12 1L14 4L18 3L19 7L23 8L21 12L23 16L19 17L18 21L14 20L12 23L10 20L6 21L5 17L1 16L3 12L1 8L5 7L6 3L10 4Z" fill="currentColor"/><circle cx="12" cy="12" r="4" fill="none" stroke="#5f8580" stroke-width="3"/></symbol>
<symbol id="logo" viewBox="0 0 24 24"><path d="M6 1L14 1V8Q22 7 22 14Q22 22 13 23Q5 22 3 18Z" fill="#1a5fc8"/><path d="M9 7V15Q9 19 13 19Q17 18 17 14Q16 11 12 12" fill="none" stroke="#dbe9fb" stroke-width="2.2"/></symbol>
</svg>

<header class="titlebar">
  <span class="nx">NX</span>
  <span class="titletext">NX 10 - 建模 - [6-mod.prt （修改的） ]</span>
  <span class="siemens">SIEMENS</span>
  <span class="wbtn min"></span>
  <svg class="wic" viewBox="0 0 18 18"><path d="M6 2H16V11H13M6 2V6M2 6H12V16H2ZM2 8H12M6 4H16" fill="none" stroke="#555"/></svg>
  <svg class="wic close" viewBox="0 0 18 18"><path d="M3 3L15 15M15 3L3 15" stroke="#444" stroke-width="2.2"/></svg>
</header>

<nav class="menubar">
  <svg class="logo"><use href="#logo"/></svg>
  <span class="mi">文件(<u>F</u>)</span><span class="mi">编辑(<u>E</u>)</span><span class="mi">视图(<u>V</u>)</span><span class="mi">插入(<u>S</u>)</span><span class="mi">格式(<u>R</u>)</span><span class="mi">工具(<u>T</u>)</span><span class="mi">装配(<u>A</u>)</span><span class="mi">信息(<u>I</u>)</span><span class="mi">分析(<u>L</u>)</span>
  <span class="mi far">首选项(<u>P</u>)</span><span class="mi">窗口(<u>O</u>)</span><span class="mi gc">GC工具箱</span><span class="mi">帮助(<u>H</u>)</span>
  <span class="wbtn min big"></span>
  <svg class="wic2" viewBox="0 0 18 18"><path d="M6 2H16V11H12M6 2V6M2 6H12V16H2ZM2 8H12M6 4H16" fill="none" stroke="#111" stroke-width="1.7"/></svg>
  <svg class="wic2 close2" viewBox="0 0 18 18"><path d="M2 2L16 16M16 2L2 16" stroke="#111" stroke-width="2.8"/></svg>
</nav>

<div class="tb r1">
  <span class="grip s"></span>
  <svg class="i"><use href="#start"/></svg><span class="big-label">启动</span><span class="car m1"></span>
  <svg class="i"><use href="#doc"/></svg><svg class="i"><use href="#folder"/></svg><svg class="i"><use href="#save"/></svg>
  <span class="sep"></span>
  <svg class="i"><use href="#cut"/></svg><svg class="i"><use href="#copy"/></svg><svg class="i"><use href="#paste"/></svg><svg class="i"><use href="#xx"/></svg>
  <span class="sep"></span>
  <svg class="i"><use href="#undo"/></svg><span class="car"></span><svg class="i m1"><use href="#redo"/></svg>
  <span class="sep"></span>
  <svg class="i"><use href="#stack"/></svg><span class="car"></span>
  <span class="sep"></span>
  <svg class="i"><use href="#dia"/></svg><svg class="i"><use href="#boxes"/></svg>
  <label class="search m10"><span>查找命令</span><svg class="mag" viewBox="0 0 24 24"><circle cx="15" cy="9" r="6.5" fill="#fff" stroke="#444" stroke-width="1.5"/><path d="M10 14L3 22" stroke="#444" stroke-width="3"/></svg></label>
  <span class="more m10"><b>»</b><em></em></span><span class="grip"></span>
  <svg class="i"><use href="#fit"/></svg><span class="car m2"></span>
  <svg class="i m1"><use href="#vsheet"/></svg><span class="car m1"></span>
  <svg class="i m1"><use href="#cubeg"/></svg><span class="car m1"></span>
  <svg class="i m1"><use href="#cube"/></svg><svg class="i"><use href="#cubew"/></svg><svg class="i"><use href="#cubewire"/></svg><svg class="i"><use href="#gradbox"/></svg><span class="car m1"></span>
  <span class="sep m1"></span>
  <svg class="i"><use href="#pane1"/></svg><svg class="i"><use href="#pane2"/></svg><span class="car low m1"></span>
  <span class="grip m3"></span>
  <svg class="i"><use href="#line"/></svg><svg class="i"><use href="#arc"/></svg><svg class="i"><use href="#rings"/></svg><svg class="i"><use href="#helix"/></svg><svg class="i"><use href="#swirl"/></svg><svg class="i"><use href="#poly"/></svg><svg class="i" viewBox="0 0 31 24"><text class="aglyph" x="15.500" y="21">A</text></svg><svg class="i"><use href="#outline"/></svg><svg class="i"><use href="#curvea"/></svg><svg class="i"><use href="#curveb"/></svg><svg class="i"><use href="#curvec"/></svg><svg class="i"><use href="#bar"/></svg><svg class="i"><use href="#twist"/></svg><svg class="i"><use href="#cyl"/></svg><svg class="i"><use href="#hex"/></svg><span class="car low"></span>
</div>

<div class="tb r2">
  <span class="grip s"></span>
  <svg class="i"><use href="#sheet"/></svg><span class="car"></span>
  <svg class="i"><use href="#ocyl"/></svg><span class="car"></span>
  <svg class="i m1"><use href="#ocube"/></svg><svg class="i m1"><use href="#hollow"/></svg><svg class="i"><use href="#thread"/></svg>
  <span class="sep"></span>
  <svg class="i"><use href="#tray"/></svg><span class="car"></span>
  <svg class="i m5"><use href="#pad"/></svg><svg class="i mn3"><use href="#ogrid"/></svg><svg class="i m1"><use href="#omix"/></svg><svg class="i m2"><use href="#sphere"/></svg><span class="car"></span>
  <svg class="i"><use href="#book"/></svg><svg class="i m1"><use href="#split"/></svg><span class="car"></span>
  <svg class="i"><use href="#byel"/></svg><svg class="i"><use href="#patch"/></svg><svg class="i"><use href="#bdash"/></svg>
  <svg class="i m8"><use href="#otop"/></svg><span class="car"></span>
  <svg class="i"><use href="#otop2"/></svg><svg class="i m1"><use href="#otop3"/></svg>
  <span class="more tight m9"><b>»</b><em></em></span>
  <span class="grip m2"></span>
  <svg class="i active"><use href="#lasso"/></svg>
  <svg class="i m6"><use href="#dline"/></svg><svg class="i"><use href="#axes"/></svg><svg class="i m2"><use href="#plines"/></svg><svg class="i"><use href="#xlines"/></svg><svg class="i m3"><use href="#scurve"/></svg><svg class="i m3"><use href="#loop"/></svg><svg class="i"><use href="#wave"/></svg><svg class="i"><use href="#zig"/></svg><svg class="i m1"><use href="#hash"/></svg>
  <span class="sep"></span>
  <svg class="i"><use href="#carc"/></svg><svg class="i"><use href="#carc2"/></svg><svg class="i m1"><use href="#brack"/></svg><svg class="i m2"><use href="#brack2"/></svg>
  <span class="sep"></span>
  <svg class="i"><use href="#circ"/></svg><svg class="i"><use href="#circt"/></svg><svg class="i"><use href="#circs"/></svg><svg class="i m2"><use href="#circq"/></svg>
  <span class="sep"></span>
  <svg class="i"><use href="#circ"/></svg><svg class="i"><use href="#circr"/></svg>
  <span class="more tight m24"><b>»</b><em></em></span>
  <span class="grip m2"></span>
  <svg class="i"><use href="#ydoc"/></svg><svg class="i m1"><use href="#cross1"/></svg><svg class="i"><use href="#cross2"/></svg><svg class="i"><use href="#scurve2"/></svg><svg class="i m1"><use href="#corner"/></svg><svg class="i m2"><use href="#tab"/></svg><svg class="i"><use href="#rcurve"/></svg><svg class="i"><use href="#curvec"/></svg><span class="car"></span>
</div>

<div class="tb r3">
  <span class="combo c1 m5"><span>没有选择过滤器</span></span>
  <span class="combo c2 m8"><span>仅在工作部件内</span></span>
  <svg class="i off m6"><use href="#gblob"/></svg><span class="sep thin"></span>
  <svg class="i off"><use href="#poly"/></svg><svg class="i"><use href="#rect"/></svg><span class="car small"></span>
  <svg class="i m1 half"><use href="#carc2"/></svg><svg class="i m3 off"><use href="#carc"/></svg><span class="sep thin"></span>
  <svg class="i m2"><use href="#rect"/></svg>
  <span class="behind"></span><span class="sep wide"></span>
  <svg class="i g1 off"><use href="#gblob"/></svg><svg class="i g1 off"><use href="#line"/></svg><svg class="i g1 off"><use href="#line"/></svg><svg class="i g1 off"><use href="#scurve"/></svg><svg class="i g1 off"><use href="#poly"/></svg><svg class="i g1 off"><use href="#cross2"/></svg><svg class="i g1 off"><use href="#circ"/></svg><svg class="i g1 off"><use href="#circle"/></svg><svg class="i g1 off"><use href="#plus"/></svg><svg class="i g1 off"><use href="#line"/></svg><svg class="i g1 off"><use href="#gblob"/></svg>
  <span class="sep thin m1"></span>
  <svg class="i g1 off"><use href="#hash"/></svg>
  <span class="car low end"></span>
</div>

<main class="workarea">
  <section class="viewport">
    <svg class="scene" width="1642" height="760">
      <defs>
        <linearGradient id="vbg" x1="0" y1="0" x2="0" y2="1"><stop offset="0" stop-color="#1a1a1a"/><stop offset=".1" stop-color="#2a2a2a"/><stop offset=".4" stop-color="#424242"/><stop offset=".67" stop-color="#4f4f4f"/><stop offset="1" stop-color="#585858"/></linearGradient>
        <linearGradient id="rt" gradientUnits="userSpaceOnUse" x1="285" y1="285" x2="680" y2="680"><stop offset="0" stop-color="#327a14"/><stop offset=".3" stop-color="#2f7512"/><stop offset=".45" stop-color="#30761a"/><stop offset=".65" stop-color="#25590f"/><stop offset=".78" stop-color="#1b460c"/><stop offset="1" stop-color="#133a07"/></linearGradient>
        <linearGradient id="lf" gradientUnits="userSpaceOnUse" x1="200" y1="500" x2="640" y2="130"><stop offset="0" stop-color="#3b8e1a"/><stop offset=".45" stop-color="#3b8e1a" stop-opacity=".75"/><stop offset="1" stop-color="#3b8e1a" stop-opacity="0"/></linearGradient>
        <radialGradient id="endc" gradientUnits="userSpaceOnUse" cx="400" cy="740" r="330"><stop offset="0" stop-color="#2f6c12"/><stop offset="1" stop-color="#1e560c"/></radialGradient>
        <filter id="bl" filterUnits="userSpaceOnUse" x="-300" y="-300" width="2400" height="1800"><feGaussianBlur stdDeviation="26"/></filter>
        <filter id="bls" filterUnits="userSpaceOnUse" x="-300" y="-300" width="2400" height="1800"><feGaussianBlur stdDeviation="12"/></filter>
        <clipPath id="ltclip"><path d="M45 760C75 600 170 390 350 225C480 130 680 90 870 90C1050 92 1250 155 1600 260L1600 870C1400 770 1100 630 880 630C770 632 690 670 640 730L330 750Z"/></clipPath>
      </defs>
      <rect width="1642" height="760" fill="url(#vbg)"/>
      <g transform="translate(1140,73) scale(.33333)">
        <path d="M452 115L260 310L-100 690V1320C50 1260 160 1200 260 1110L400 980L700 650L960 390Z" fill="url(#rt)"/>
        <path d="M450 130C450 70 520 50 600 52C720 60 880 120 960 220C1000 280 1000 350 970 385C930 415 800 415 680 360C580 310 450 230 450 130Z" fill="#5bd42a"/>
        <path d="M690 65L515 260C430 350 370 425 300 490C200 590 100 680 -100 830" stroke="#dcdcdc" stroke-width="7" fill="none"/>
        <path d="M752 395C600 560 430 770 280 900C170 1000 60 1100 -100 1200" stroke="#1fa844" stroke-width="4" fill="none"/>
      </g>
      <g transform="translate(190,93) scale(.33333)">
        <path d="M45 760C75 600 170 390 350 225C480 130 680 90 870 90C1050 92 1250 155 1600 260L1600 870C1400 770 1100 630 880 630C770 632 690 670 640 730L330 750Z" fill="#55c42a"/>
        <g clip-path="url(#ltclip)">
          <path d="M60 770C100 540 230 350 430 210C520 150 600 120 720 100" stroke="url(#lf)" stroke-width="170" fill="none" filter="url(#bl)"/>
          <path d="M320 680C380 480 600 420 880 420C1100 425 1350 520 1650 660" stroke="#2b7a13" stroke-width="210" fill="none" filter="url(#bl)"/>
          <path d="M560 690C640 610 760 580 900 580C1100 590 1350 690 1650 830" stroke="#12380a" stroke-width="120" fill="none" filter="url(#bl)"/>
          <path d="M540 340C620 300 730 280 830 270" stroke="#8cec60" stroke-width="20" fill="none" filter="url(#bls)"/>
          <path d="M1240 325C1340 350 1430 385 1520 425" stroke="#84e458" stroke-width="28" fill="none" filter="url(#bls)"/>
        </g>
        <ellipse cx="338" cy="755" rx="292" ry="163" fill="url(#endc)" stroke="#22aa48" stroke-width="4.500"/>
        <path d="M305 590C330 490 380 380 470 310C580 230 720 200 860 203C1040 210 1250 285 1600 420" stroke="#dcdcdc" stroke-width="8" fill="none"/>
        <path d="M372 915C420 790 490 690 555 635C650 560 780 530 900 530C1050 535 1250 600 1600 720" stroke="#1fa844" stroke-width="4" fill="none"/>
        <path d="M303 590Q325 480 360 385L362 420Q340 510 312 590Z" fill="#b8780f"/>
        <path d="M370 915Q395 800 425 710Q430 800 380 915Z" fill="#b8780f"/>
        <path d="M628 730L648 830H640L652 872L665 830H658L634 730Z" fill="#eaa812"/>
        <path d="M332 615Q322 680 335 745Q345 680 332 615Z" fill="#a0b09a"/>
        <path d="M340 760L362 850L350 840Z" fill="#a8c4f4"/>
        <path d="M345 750Q430 735 510 740Q430 755 345 750Z" fill="#f0c0b0"/>
        <circle cx="50" cy="784" r="12" fill="#e8a812"/>
        <text class="lbl" x="462" y="727" fill="#b03028">XC</text>
        <text class="lbl" x="303" y="880" fill="#1a40e8">ZC</text>
        <text class="lbl" x="350" y="610" fill="#4a7a35">YC</text>
      </g>
      <g transform="translate(30,643) scale(.33333)">
        <path d="M90 40V155" stroke="#3f7c1c" stroke-width="11"/>
        <path d="M95 100L165 95L172 200L108 208L95 170Z" fill="#b6b6b6" stroke="#c8a8c8" stroke-width="3"/>
        <path d="M100 157L220 148L100 150Z" fill="#d83028"/>
        <path d="M88 165L110 240" stroke="#1a30e8" stroke-width="9"/>
        <circle cx="90" cy="160" r="7" fill="#eee"/>
        <text class="tiny" x="220" y="162" fill="#c03030">X</text>
        <text class="tiny" x="80" y="52" fill="#3f7c1c">Y</text>
        <text class="tiny" x="100" y="256" fill="#1a30e8">Z</text>
      </g>
    </svg>
    <span class="viewlabel">俯视图 工作 摄像机 俯视图</span>
  </section>
  <aside class="sidebar">
    <svg class="sgear" viewBox="0 0 24 24"><path d="M12 1L14 4L18 3L19 7L23 8L21 12L23 16L19 17L18 21L14 20L12 23L10 20L6 21L5 17L1 16L3 12L1 8L5 7L6 3L10 4Z" fill="#555"/><circle cx="12" cy="12" r="5" fill="#dcdcdc"/></svg>
    <svg class="si t27"><use href="#nav1"/></svg><svg class="si t11"><use href="#nav2"/></svg><svg class="si t12"><use href="#nav3"/></svg><svg class="si t12"><use href="#nav4"/></svg><svg class="si t25"><use href="#nav5"/></svg><svg class="si t24"><use href="#nav6"/></svg><svg class="si t23"><use href="#nav7"/></svg><svg class="si t13"><use href="#nav8"/></svg><svg class="si t12"><use href="#nav9"/></svg><svg class="si t11"><use href="#nav10"/></svg><svg class="si t11"><use href="#nav11"/></svg>
  </aside>
</main>

<div class="tb r4">
  <span class="grip s"></span>
  <span class="combo c3 m5"><span>1</span></span>
  <svg class="i m4"><use href="#stackdoc"/></svg><svg class="i"><use href="#stackdoc"/></svg><span class="car"></span>
  <span class="sep thin"></span><svg class="i"><use href="#ydia"/></svg><span class="sep"></span>
  <svg class="i"><use href="#rdia"/></svg><span class="car"></span><svg class="i m2"><use href="#rdia"/></svg><svg class="i"><use href="#dia2"/></svg><svg class="i"><use href="#dia3"/></svg>
  <span class="sep"></span>
  <svg class="i"><use href="#ruler"/></svg><span class="car"></span><svg class="i m1"><use href="#ruler2"/></svg>
  <span class="more m9"><b>»</b><em></em></span><span class="grip"></span>
  <svg class="i"><use href="#sknew"/></svg><svg class="i"><use href="#skdone"/></svg><span class="finish">完成草图</span>
  <svg class="i m4"><use href="#studio"/></svg><svg class="i m1"><use href="#line"/></svg><svg class="i m1"><use href="#arc"/></svg><svg class="i"><use href="#circle"/></svg><svg class="i m1"><use href="#gfill"/></svg><svg class="i m1"><use href="#gfill"/></svg><svg class="i"><use href="#rect"/></svg><svg class="i m2"><use href="#hex"/></svg><svg class="i"><use href="#poly"/></svg><svg class="i m3"><use href="#plus"/></svg><svg class="i m2"><use href="#goutline"/></svg><span class="car"></span>
  <svg class="i m2"><use href="#gblob"/></svg><svg class="i"><use href="#gcyl"/></svg><span class="sep thin"></span>
  <svg class="i"><use href="#gx1"/></svg><svg class="i m1"><use href="#gx1"/></svg><span class="sep"></span>
  <svg class="i m1"><use href="#gx2"/></svg><span class="car"></span><span class="sep thin"></span>
  <svg class="i m2"><use href="#gpar"/></svg><svg class="i m2"><use href="#gpar"/></svg><span class="car"></span><span class="car low"></span>
  <span class="grip"></span>
  <svg class="i"><use href="#pbox"/></svg><span class="car"></span><svg class="i m2"><use href="#pbox2"/></svg><span class="car low"></span>
  <span class="grip"></span>
  <svg class="i"><use href="#ywing"/></svg><svg class="i"><use href="#net1"/></svg><svg class="i m2"><use href="#net2"/></svg><svg class="i m1"><use href="#net3"/></svg><svg class="i"><use href="#net4"/></svg><svg class="i m1"><use href="#net5"/></svg><svg class="i m1"><use href="#net6"/></svg><svg class="i m1"><use href="#net7"/></svg><span class="car"></span>
  <span class="more m1"><b>»</b><em></em></span>
</div>

<footer class="status">
  <span class="cue">选择要添加到引导线的曲线/边 ，或使用 MB2 来完成引导线</span>
  <span class="selinfo">样条 已选定</span>
  <svg class="sbi"><use href="#sb1"/></svg><svg class="sbi"><use href="#sb2"/></svg>
</footer>

<div class="dialog">
  <div class="dlg-title">
    <svg class="dgear"><use href="#gearw"/></svg>
    <span class="dlg-name">扫掠</span>
    <svg class="refresh" viewBox="0 0 24 24"><path d="M17 5A9 9 0 1 1 7 5" fill="none" stroke="#fff" stroke-width="3"/><path d="M7 0L12 6L5 9Z" fill="#fff"/></svg>
    <svg class="dclose" viewBox="0 0 24 24"><path d="M3 3L21 21M21 3L3 21" stroke="#fff" stroke-width="3.4"/></svg>
  </div>
  <div class="dlg-body">
    <div class="panes">
      <section class="card h175">
        <h3 class="head">截面<svg class="chev"><path d="M2 12L9 4L16 12"/></svg></h3>
        <div class="row h34"><span>选择曲线 (0)</span><span class="btns"><svg class="b small dim"><use href="#creset"/></svg><svg class="b"><use href="#cselect"/></svg></span></div>
        <div class="row h34 dis"><span>指定原始曲线</span><span class="btns"><svg class="b"><use href="#cspec"/></svg></span></div>
        <div class="row h30 dis"><span>添加新集</span><span class="btns"><svg class="b add dim"><use href="#cadd"/></svg></span></div>
        <div class="list"><span>列表</span><svg class="chev dn"><path d="M2 5L9 13L16 5"/></svg></div>
      </section>
      <section class="card h177">
        <h3 class="head cream"><span>引导线（ 最多 3 条 ）</span><svg class="chev"><path d="M2 12L9 4L16 12"/></svg></h3>
        <div class="row h32 mt4"><span class="picked"><svg class="tick" viewBox="0 0 14 14"><path d="M1 7L5 12L13 2" fill="none" stroke="#2aa52a" stroke-width="3"/></svg>选择曲线 (1)</span><span class="btns"><svg class="b small"><use href="#creset"/></svg><svg class="b yel"><use href="#cselect"/></svg></span></div>
        <div class="row h34 dis"><span>指定原始曲线</span><span class="btns"><svg class="b"><use href="#cspec"/></svg></span></div>
        <div class="row h32"><span>添加新集</span><span class="btns"><svg class="b add blue"><use href="#cadd"/></svg></span></div>
        <div class="list"><span>列表</span><svg class="chev dn"><path d="M2 5L9 13L16 5"/></svg></div>
      </section>
      <section class="card h79">
        <h3 class="head">脊线<svg class="chev"><path d="M2 12L9 4L16 12"/></svg></h3>
        <div class="row h34 mt2"><span>选择曲线 (0)</span><span class="btns"><svg class="b"><use href="#cselect"/></svg></span></div>
      </section>
      <section class="card last">
        <h3 class="head">截面选项<svg class="chev"><path d="M2 12L9 4L16 12"/></svg></h3>
        <div class="row h36"><span>截面位置</span><span class="drop"><span class="seltxt">沿引导线任何位置</span></span></div>
        <div class="row h28"><label class="check"><span class="box"></span>保留形状</label></div>
        <div class="row h36"><span>对齐</span><span class="drop"><span class="dt">参数</span></span></div>
        <div class="sub">
          <div class="subhead"><span>缩放方法</span><svg class="chev"><path d="M2 12L9 4L16 12"/></svg></div>
          <div class="subrow"><span>缩放</span><span class="drop"><span class="dt">均匀</span></span></div>
        </div>
      </section>
    </div>
    <div class="scroll">
      <span class="tri up"></span>
      <span class="thumb"><i></i></span>
      <span class="tri down"></span>
    </div>
  </div>
  <div class="dlg-foot">
    <div class="collapse"><span class="tri up dark"></span></div>
    <div class="actions">
      <button class="btn">&lt; 确定 &gt;</button><button class="btn">应用</button><button class="btn">取消</button>
    </div>
  </div>
</div>
</body>
</html>
```
FILE: styles.css
```css
* { box-sizing: border-box; }
html, body { margin: 0; padding: 0; }
body {
  width: 1680px; height: 1050px; overflow: hidden; position: relative;
  background: #fff; color: #222;
  font-family: "Noto Sans CJK SC", "Noto Sans", "Liberation Sans", sans-serif;
  display: flex; flex-direction: column;
}
.sprite { position: absolute; width: 0; height: 0; }

/* title */
.titlebar { height: 40px; display: flex; align-items: center; background: #fff; flex: none; }
.nx { font: 700 29px "Liberation Sans", sans-serif; color: #8b9aa2; margin-left: 4px; width: 45px; border-right: 1px solid #e2e2e2; line-height: 34px; letter-spacing: -1px; }
.titletext { margin-left: 6px; font-size: 19px; color: #222; white-space: pre; }
.siemens { margin-left: auto; font: 700 17px "Liberation Sans", sans-serif; color: #009a9a; letter-spacing: .2px; }
.wbtn.min { width: 10px; height: 3px; background: #555; margin-left: 32px; margin-top: 10px; }
.wic { width: 18px; height: 18px; margin-left: 19px; }
.wic.close { margin-left: 18px; margin-right: 9px; }

/* menu */
.menubar { height: 41px; background: #c4d6d0; display: flex; align-items: center; flex: none; padding-left: 10px; font-size: 21px; color: #222; }
.logo { width: 20px; height: 22px; margin-right: 8px; flex: none; }
.mi { margin-right: 15.5px; white-space: nowrap; line-height: 41px; }
.mi u { text-underline-offset: 2px; }
.far { margin-left: 14px; }
.gc { margin-right: 18.5px; }
.wbtn.big { width: 15px; height: 4px; margin-left: auto; margin-top: 14px; background: #111; }
.wic2 { width: 22px; height: 22px; margin-left: 15px; }
.close2 { margin-left: 10px; margin-right: 7px; }

/* toolbars */
.tb { display: flex; align-items: center; flex: none; background: #fff; border-bottom: 1px solid #d4d4d4; }
.tb .i { width: 30px; height: 25px; flex: none; display: block; }
.r1 { height: 45px; }
.r1 .i { width: 31px; height: 25px; }
.aglyph { font: 25px "Liberation Serif", serif; fill: #333; text-anchor: middle; }
.r2 { height: 35px; }
.r2 .i { height: 25px; }
.r3 { height: 45px; border-bottom: none; margin-bottom: 1px; }
.r3 .i { width: 22px; height: 19px; }
.r3 .i.g1 { width: 23px; height: 19px; }
.r4 { height: 45px; border-bottom: 1px solid #c8c8c8; padding-top: 4px; }
.r4 .i { height: 25px; }
.grip { width: 9px; height: 78%; flex: none; background: radial-gradient(circle, #aaa 1px, transparent 1.2px) center top/4px 4px repeat-y; }
.grip.s { width: 7px; }
.sep { width: 7px; height: 80%; flex: none; background: linear-gradient(#dcdcdc, #dcdcdc) center/1px 100% no-repeat; }
.sep.thin { width: 4px; }
.sep.wide { width: 4px; }
.car { width: 18px; height: 8px; flex: none; display: flex; justify-content: center; padding-left: 2px; }
.r1 .car { width: 15px; padding-left: 0; }
.car::before { content: ""; border: 4px solid transparent; border-top: 5px solid #222; border-bottom: 0; }
.car.low { align-self: flex-end; margin-bottom: 7px; }
.car.small { width: 14px; padding-left: 0; }
.car.end { margin-left: auto; margin-right: 5px; margin-bottom: 8px; }
.more { width: 18px; height: 100%; flex: none; display: flex; flex-direction: column; align-items: center; justify-content: space-between; padding: 2px 0 9px; }
.more b { font: 700 14px/16px "Liberation Sans", sans-serif; color: #222; }
.more em { border: 4px solid transparent; border-top: 5px solid #222; border-bottom: 0; }
.more.tight { padding: 1px 0 7px; }
.more.tight b { line-height: 14px; }
.big-label { font-size: 22px; width: 43px; flex: none; color: #222; white-space: nowrap; }
.search { width: 238px; height: 33px; border: 1px solid #aaa; flex: none; display: flex; align-items: center; justify-content: space-between; font-size: 22px; padding: 0 12px 0 1px; color: #222; }
.mag { width: 24px; height: 26px; }
.active { background: #b9d2c6; width: 31px !important; height: 33px !important; }
.combo { height: 33px; border: 1px solid #bbb; flex: none; font-size: 22px; display: flex; align-items: center; justify-content: space-between; padding: 0 8px 0 2px; color: #222; white-space: nowrap; }
.combo::after { content: ""; border: 5px solid transparent; border-top: 6px solid #222; border-bottom: 0; }
.c1 { width: 247px; }
.c2 { width: 261px; }
.c3 { width: 79px; height: 34px; font-size: 24px; padding-left: 3px; font-family: "Liberation Sans", sans-serif; }
.behind { width: 464px; height: 100%; flex: none; display: flex; align-items: center; padding-left: 80px; }
.behind::before { content: ""; width: 261px; height: 33px; border: 1px solid #bbb; }
.half { opacity: .7; }
.off { opacity: .38; filter: grayscale(1); }
.finish { color: #c4c4c4; font-size: 22px; margin-left: 3px; width: 88px; white-space: nowrap; flex: none; }

.m1 { margin-left: 1px; } .m2 { margin-left: 2px; } .m3 { margin-left: 3px; } .m4 { margin-left: 4px; }
.m5 { margin-left: 5px; } .m6 { margin-left: 6px; } .m8 { margin-left: 8px; } .m9 { margin-left: 9px; }
.m10 { margin-left: 10px; } .m24 { margin-left: 24px; } .mn3 { margin-left: -3px; }

/* workarea */
.workarea { height: 760px; display: flex; flex: none; }
.viewport { width: 1642px; position: relative; flex: none; overflow: hidden; }
.scene { display: block; }
.lbl { font: 700 36px "Liberation Sans", sans-serif; }
.tiny { font: 28px "Liberation Sans", sans-serif; }
.viewlabel { position: absolute; left: 6px; bottom: 3px; font-size: 13px; word-spacing: 2px; color: #cfcfcf; line-height: 16px; white-space: nowrap; }
.sidebar { width: 38px; flex: none; background: #dcdcdc; border-left: 6px solid #f4f4f4; display: flex; flex-direction: column; align-items: center; }
.sgear { width: 16px; height: 18px; margin-top: 4px; flex: none; }
.si { width: 28px; height: 30px; flex: none; }
.t11 { margin-top: 11px; } .t12 { margin-top: 12px; } .t13 { margin-top: 13px; } .t23 { margin-top: 23px; }
.t24 { margin-top: 24px; } .t25 { margin-top: 25px; } .t27 { margin-top: 27px; }

/* status */
.status { height: 38px; flex: 1; display: flex; align-items: center; font-size: 22px; font-weight: 700; word-spacing: 2px; color: #1a1a1a; border-top: 1px solid #e4e4e4; border-bottom: 2px solid #333; padding-left: 2px; background: #fff; white-space: nowrap; }
.cue { width: 784px; flex: none; }
.sbi { width: 22px; height: 20px; flex: none; }
.selinfo { margin-right: auto; }
.sbi:last-child { margin-right: 50px; }

/* dialog */
.dialog { position: absolute; left: 686px; top: 174px; width: 455px; height: 760px; display: flex; flex-direction: column; background: #fff; box-shadow: 0 1px 2px rgba(0,0,0,.4); }
.dlg-title { height: 37px; flex: none; background: #5f8580; color: #fff; display: flex; align-items: center; padding: 0 9px; border-bottom: 1px solid #a8c0bc; }
.dgear { width: 26px; height: 26px; color: #fff; margin-left: 0; flex: none; }
.dlg-name { font-size: 27px; margin-left: 11px; line-height: 37px; }
.refresh { width: 24px; height: 24px; margin-left: auto; }
.dclose { width: 22px; height: 22px; margin-left: 15px; margin-right: 0; }
.dlg-body { height: 659px; flex: none; display: flex; background: #fff; }
.panes { width: 424px; flex: none; padding: 4px 2px 0 6px; display: flex; flex-direction: column; gap: 3px; overflow: hidden; background: linear-gradient(#fff, #fff) 0 0/6px 100% no-repeat, #dcdcdc; }
.card { background: #fff; flex: none; padding: 0 9px; }
.h175 { height: 175px; }
.h177 { height: 177px; }
.h79 { height: 79px; }
.last { flex: 1; }
.head { height: 36px; margin: 0 -3px 0 -1px; font-size: 20px; font-weight: 400; color: #2f8dc0; display: flex; align-items: center; justify-content: space-between; white-space: nowrap; }
.head.cream { background: #fdf6dc; margin: 0 -9px; padding: 0 6px 0 8px; word-spacing: 4px; }
.chev { width: 18px; height: 17px; flex: none; fill: none; stroke: #2a8dc4; stroke-width: 3.4; }
.row { display: flex; align-items: center; justify-content: space-between; font-size: 18px; color: #222; white-space: nowrap; }
.row.dis { color: #aeaeae; }
.h28 { height: 28px; } .h30 { height: 30px; } .h32 { height: 32px; } .h34 { height: 34px; } .h36 { height: 36px; }
.mt2 { margin-top: 2px; } .mt4 { margin-top: 4px; }
.btns { display: flex; align-items: center; gap: 3px; flex: none; }
.b { width: 31px; height: 32px; padding: 2px; border: 1px dotted #a8a8a8; background: #fff; flex: none; display: block; }
.b.small { width: 23px; height: 24px; padding: 2px; }
.b.add { width: 23px; height: 27px; padding: 1px; }
.b.dim { opacity: .38; }
.b.yel { background: #fbe79f; }
.b.blue { background: #9cc8ea; border-color: #7aa8d0; }
.picked { width: 337px; height: 32px; background: #fad36a; display: flex; align-items: center; padding-left: 3px; color: #222; gap: 4px; }
.tick { width: 13px; height: 13px; flex: none; }
.list { height: 31px; margin-top: 1px; background: #f0f7f6; border: 1px solid #e4ecea; display: flex; align-items: center; justify-content: space-between; padding: 0 3px 0 8px; color: #2f8dc0; font-size: 18px; margin-right: 1px; }
.drop { width: 151px; height: 32px; border: 1px solid #bbb; display: flex; align-items: center; position: relative; padding: 0 24px 0 3px; background: #fff; flex: none; overflow: hidden; white-space: nowrap; }
.drop::after { content: ""; position: absolute; right: 5px; top: 13px; border: 5px solid transparent; border-top: 6px solid #222; border-bottom: 0; }
.seltxt { background: #3c8fe8; color: #fff; width: 119px; height: 25px; line-height: 25px; display: block; overflow: hidden; font-size: 18px; outline: 1px dotted #c87f20; }
.dt { font-size: 18px; color: #222; }
.check { display: flex; align-items: center; gap: 5px; color: #333; }
.box { width: 21px; height: 22px; border: 1px solid #888; background: linear-gradient(#dcdcdc, #f4f4f4); }
.sub { margin: 0 1px; height: 78px; background: #f0f7f6; padding: 0 4px 0 7px; border-top: 1px solid #e0e8e6; }
.subhead { height: 30px; display: flex; align-items: center; justify-content: space-between; color: #2f8dc0; font-size: 18px; }
.subrow { height: 32px; margin-top: 6px; padding-right: 3px; display: flex; align-items: center; justify-content: space-between; font-size: 18px; color: #333; }
.scroll { flex: 1; background: #fff; display: flex; flex-direction: column; align-items: flex-start; padding: 16px 0 0 1px; border-left: 1px solid #ddd; }
.thumb { width: 23px; height: 532px; margin-top: 12px; background: linear-gradient(90deg, #dadada, #c8c8c8); display: flex; align-items: center; justify-content: center; }
.thumb i { width: 12px; height: 12px; border-top: 1px solid #999; border-bottom: 1px solid #999; background: linear-gradient(#999,#999) center/100% 1px no-repeat; }
.tri { display: block; border: 5px solid transparent; margin-left: 7px; }
.tri.up { border-bottom: 5px solid #444; border-top: 0; }
.tri.down { border-top: 5px solid #444; border-bottom: 0; margin-top: 76px; }
.dlg-foot { flex: 1; background: #e9e9e9; display: flex; flex-direction: column; }
.collapse { height: 13px; flex: none; display: flex; justify-content: center; align-items: center; border-bottom: 1px solid #dcdcdc; margin: 0 6px; }
.tri.up.dark { margin: 0 0 0 -4px; border-width: 0 6px 6px; border-bottom-color: #111; border-left-color: transparent; border-right-color: transparent; }
.actions { display: flex; justify-content: flex-end; gap: 5px; padding: 8px 16px 0 0; }
.btn { width: 66px; height: 31px; border: 1px solid #bbb; background: #c8c8c8; font: 18px "Noto Sans CJK SC", sans-serif; color: #333; padding: 0; white-space: nowrap; line-height: 28px; }
```
